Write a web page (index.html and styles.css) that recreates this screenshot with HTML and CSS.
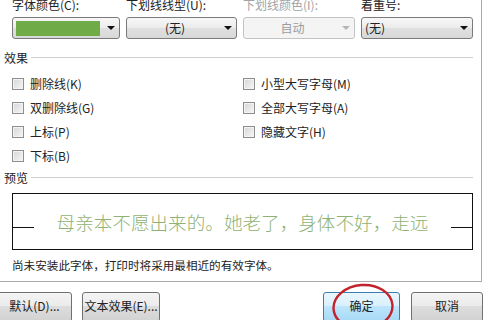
FILE: index.html
```html
<!DOCTYPE html>
<html>
<head>
<meta charset="UTF-8">
<title>字体</title>
<link rel="stylesheet" href="styles.css">
</head>
<body>
<div class="tab">
  <div class="fields">
    <div class="field">
      <div class="lbl">字体颜色(C):</div>
      <div class="combo"><span class="value"><span class="swatch"></span></span><span class="arrow"></span></div>
    </div>
    <div class="field">
      <div class="lbl">下划线线型(U):</div>
      <div class="combo"><span class="value center">(无)</span><span class="arrow"></span></div>
    </div>
    <div class="field disabled">
      <div class="lbl">下划线颜色(I):</div>
      <div class="combo"><span class="value center">自动</span><span class="arrow"></span></div>
    </div>
    <div class="field">
      <div class="lbl">着重号:</div>
      <div class="combo"><span class="value">(无)</span><span class="arrow"></span></div>
    </div>
  </div>

  <div class="group-title"><span>效果</span></div>
  <div class="effects">
    <label class="chk"><span class="box"></span>删除线(K)</label>
    <label class="chk"><span class="box"></span>双删除线(G)</label>
    <label class="chk"><span class="box"></span>上标(P)</label>
    <label class="chk"><span class="box"></span>下标(B)</label>
    <label class="chk"><span class="box"></span>小型大写字母(M)</label>
    <label class="chk"><span class="box"></span>全部大写字母(A)</label>
    <label class="chk"><span class="box"></span>隐藏文字(H)</label>
  </div>

  <div class="group-title preview-title"><span>预览</span></div>
  <div class="preview">
    <span class="rule"></span>
    <span class="sample">母亲本不愿出来的。她老了，身体不好，走远</span>
    <span class="rule"></span>
  </div>
  <p class="note">尚未安装此字体，打印时将采用最相近的有效字体。</p>
</div>

<div class="buttons">
  <button class="btn btn-default-set">默认(D)...</button>
  <button class="btn btn-effects">文本效果(E)...</button>
  <span class="spacer"></span>
  <button class="btn btn-ok">确定</button>
  <button class="btn btn-cancel">取消</button>
</div>

<!-- red hand-drawn circle round the OK button -->
<svg class="mark" width="72" height="50" viewBox="0 0 72 50">
  <ellipse cx="34" cy="26" rx="29.5" ry="22" transform="rotate(-4 34 26)" fill="none" stroke="#c3222a" stroke-width="2.4"/>
</svg>
</body>
</html>
```

FILE: styles.css
```css
html,body{margin:0;padding:0}
body{width:484px;height:320px;overflow:hidden;position:relative;background:#fff;font-family:"Noto Sans CJK SC","Noto Sans",sans-serif;font-size:12px;color:#222}

.tab{box-sizing:border-box;width:482px;height:282px;border-right:1px solid #a9a9a9;border-bottom:1px solid #a9a9a9;overflow:hidden}

.fields{display:grid;grid-template-columns:108px 111px 112px 112px;column-gap:6px;margin:-2px 0 0 12px}
.lbl{line-height:14px;height:14px;white-space:nowrap}
.combo{box-sizing:border-box;height:22px;margin-top:5px;display:flex;align-items:center;border:1px solid #7a7a7a;border-radius:3px;background:linear-gradient(#f7f7f7,#ececec 50%,#e0e0e0 51%,#d8d8d8)}
.value{flex:1;display:flex;align-items:center;padding-left:3px;line-height:20px;height:20px}
.value.center{justify-content:center}
.swatch{display:block;width:84px;height:15px;background:#6fac48}
.arrow{width:16px;height:20px;position:relative}
.arrow:after{content:"";position:absolute;left:4px;top:8px;border-left:4px solid transparent;border-right:4px solid transparent;border-top:4px solid #111}
.disabled .lbl{color:#a3a3a3}
.disabled .combo{border-color:#c3c3c3;background:#f4f4f4;color:#9c9c9c}
.disabled .arrow:after{border-top-color:#b5b5b5}

.group-title{display:flex;align-items:center;margin:12px 8px 0 4px;line-height:14px;height:14px}
.group-title:after{content:"";flex:1;height:1px;background:#cfcfcf;margin-left:3px;margin-top:-1px}
.preview-title{margin-top:3px}

.effects{display:grid;grid-template-rows:repeat(4,24px);grid-template-columns:231px auto;grid-auto-flow:column;margin:7px 0 0 12px}
.chk{display:flex;align-items:center;gap:6px;line-height:14px}
.box{box-sizing:border-box;width:12px;height:12px;border:1px solid #8e8f8f;background:linear-gradient(135deg,#d6d6d6,#f6f6f6);box-shadow:inset 0 0 0 1px #f2f2f2}

.preview{box-sizing:border-box;height:57px;margin:8px 8px 0 12px;border:1px solid #111;display:flex;align-items:center;justify-content:space-between}
.rule{width:21px;height:1px;background:#111;margin-top:12px}
.sample{font-size:18.6px;font-weight:300;line-height:24px;color:#8fb274;white-space:nowrap}

.note{margin:8px 0 0 12px;line-height:14px;font-size:11.6px;white-space:nowrap}

.buttons{display:flex;margin-top:10px;padding-right:1px}
.btn{box-sizing:border-box;height:30px;padding:0 0 4px;font:inherit;color:#222;border:1px solid #707070;border-radius:3px;background:linear-gradient(#f4f4f4,#ebebeb 45%,#dddddd 46%,#d2d2d2)}
.btn-default-set{width:75px;margin-left:-3px}
.btn-effects{width:78px;margin-left:10px}
.spacer{flex:1}
.btn-ok{width:77px;border-color:#3c7fb1;background:linear-gradient(#eaf6fd,#d9f0fc 45%,#bee6fd 46%,#a7d9f5)}
.btn-cancel{width:72px;margin-left:11px}

.mark{position:absolute;left:329px;top:281px}
```
